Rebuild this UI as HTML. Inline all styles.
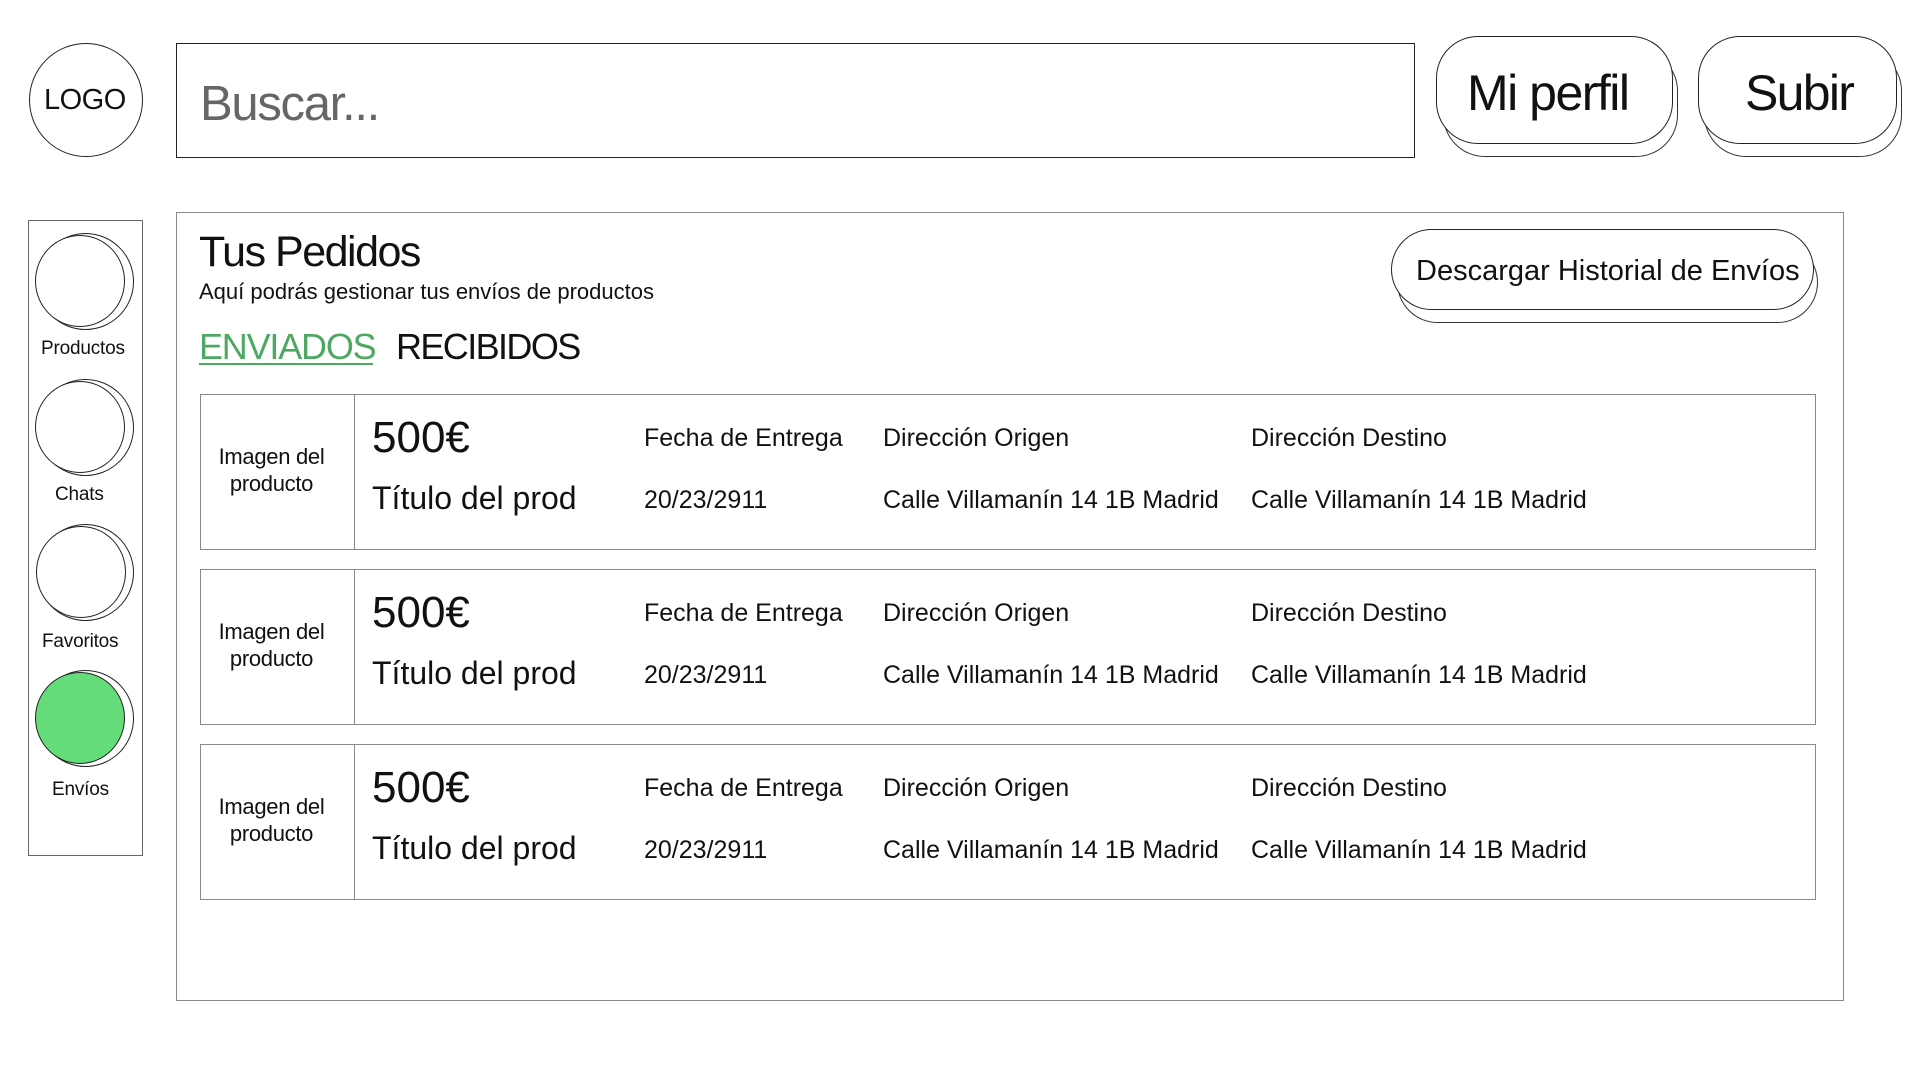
<!DOCTYPE html>
<html><head><meta charset="utf-8"><style>
*{margin:0;padding:0;box-sizing:border-box}
body{width:1920px;height:1080px;background:#fff;position:relative;overflow:hidden;font-family:"Liberation Sans",sans-serif;color:#111}
.a{position:absolute;white-space:nowrap}
.btn{position:absolute;border:1.5px solid #222;border-radius:42px;background:#fff}
.sh{position:absolute;border:1.5px solid #333;border-radius:42px;background:#fff}
.circ{position:absolute;border:1.5px solid #222;border-radius:50%;background:#fff}
.row{position:absolute;left:200px;width:1616px;height:156px;border:1.5px solid #888}
.row .div{position:absolute;left:153px;top:0;bottom:0;border-left:1.5px solid #888}
.row .img{position:absolute;left:-6px;width:153px;top:48px;text-align:center;font-size:22px;line-height:27px;letter-spacing:-0.3px}
.row .t{position:absolute;white-space:nowrap;letter-spacing:0}
</style></head><body>
<div class="circ" style="left:29px;top:43px;width:114px;height:114px"></div>
<div class="a" style="left:44px;top:84px;font-size:29px;letter-spacing:-0.5px">LOGO</div>
<div class="a" style="left:176px;top:43px;width:1239px;height:115px;border:1.5px solid #222"></div>
<div class="a" style="left:200px;top:76px;font-size:49px;color:#666;letter-spacing:-1.3px">Buscar...</div>

<div class="sh" style="left:1443px;top:49px;width:235px;height:108px"></div>
<div class="btn" style="left:1436px;top:36px;width:237px;height:108px"></div>
<div class="a" style="left:1467px;top:64px;font-size:50px;letter-spacing:-1.5px">Mi perfil</div>
<div class="sh" style="left:1704px;top:49px;width:198px;height:108px"></div>
<div class="btn" style="left:1698px;top:36px;width:199px;height:108px"></div>
<div class="a" style="left:1745px;top:64px;font-size:50px;letter-spacing:-1.7px">Subir</div>

<div class="a" style="left:28px;top:220px;width:115px;height:636px;border:1.5px solid #666"></div>
<div class="circ" style="left:37px;top:233px;width:97px;height:97px"></div>
<div class="circ" style="left:35px;top:235px;width:90px;height:92px"></div>
<div class="a" style="left:41px;top:338px;font-size:19px;letter-spacing:-0.2px">Productos</div>
<div class="circ" style="left:37px;top:379px;width:97px;height:97px"></div>
<div class="circ" style="left:35px;top:381px;width:90px;height:92px"></div>
<div class="a" style="left:55px;top:484px;font-size:19px;letter-spacing:-0.2px">Chats</div>
<div class="circ" style="left:37px;top:524px;width:97px;height:97px"></div>
<div class="circ" style="left:36px;top:526px;width:90px;height:92px"></div>
<div class="a" style="left:42px;top:631px;font-size:19px;letter-spacing:-0.2px">Favoritos</div>
<div class="circ" style="left:37px;top:670px;width:97px;height:97px"></div>
<div class="circ" style="left:35px;top:672px;width:90px;height:92px;background:#65dc7a"></div>
<div class="a" style="left:52px;top:779px;font-size:19px;letter-spacing:-0.2px">Envíos</div>

<div class="a" style="left:176px;top:212px;width:1668px;height:789px;border:1.5px solid #888"></div>
<div class="a" style="left:199px;top:228px;font-size:43px;letter-spacing:-1.5px">Tus Pedidos</div>
<div class="a" style="left:199px;top:279px;font-size:22px;letter-spacing:0">Aquí podrás gestionar tus envíos de productos</div>
<div class="a" style="left:199px;top:326px;font-size:36px;color:#4ea862;letter-spacing:-1.2px">ENVIADOS</div>
<div class="a" style="left:199px;top:363px;width:174px;height:2px;background:#4ea862"></div>
<div class="a" style="left:396px;top:326px;font-size:36px;letter-spacing:-1.6px">RECIBIDOS</div>

<div class="sh" style="left:1397px;top:242px;width:421px;height:81px"></div>
<div class="btn" style="left:1391px;top:229px;width:423px;height:81px"></div>
<div class="a" style="left:1416px;top:255px;font-size:29px;letter-spacing:0">Descargar Historial de Envíos</div>

<div class="row" style="top:394px">
<div class="div"></div><div class="img">Imagen del<br>producto</div>
<div class="t" style="left:171px;top:18px;font-size:44px">500€</div>
<div class="t" style="left:171px;top:85px;font-size:32px">Título del prod</div>
<div class="t" style="left:443px;top:29px;font-size:25px">Fecha de Entrega</div>
<div class="t" style="left:443px;top:91px;font-size:25px">20/23/2911</div>
<div class="t" style="left:682px;top:29px;font-size:25px">Dirección Origen</div>
<div class="t" style="left:682px;top:91px;font-size:25px">Calle Villamanín 14 1B Madrid</div>
<div class="t" style="left:1050px;top:29px;font-size:25px">Dirección Destino</div>
<div class="t" style="left:1050px;top:91px;font-size:25px">Calle Villamanín 14 1B Madrid</div>
</div>
<div class="row" style="top:569px">
<div class="div"></div><div class="img">Imagen del<br>producto</div>
<div class="t" style="left:171px;top:18px;font-size:44px">500€</div>
<div class="t" style="left:171px;top:85px;font-size:32px">Título del prod</div>
<div class="t" style="left:443px;top:29px;font-size:25px">Fecha de Entrega</div>
<div class="t" style="left:443px;top:91px;font-size:25px">20/23/2911</div>
<div class="t" style="left:682px;top:29px;font-size:25px">Dirección Origen</div>
<div class="t" style="left:682px;top:91px;font-size:25px">Calle Villamanín 14 1B Madrid</div>
<div class="t" style="left:1050px;top:29px;font-size:25px">Dirección Destino</div>
<div class="t" style="left:1050px;top:91px;font-size:25px">Calle Villamanín 14 1B Madrid</div>
</div>
<div class="row" style="top:744px">
<div class="div"></div><div class="img">Imagen del<br>producto</div>
<div class="t" style="left:171px;top:18px;font-size:44px">500€</div>
<div class="t" style="left:171px;top:85px;font-size:32px">Título del prod</div>
<div class="t" style="left:443px;top:29px;font-size:25px">Fecha de Entrega</div>
<div class="t" style="left:443px;top:91px;font-size:25px">20/23/2911</div>
<div class="t" style="left:682px;top:29px;font-size:25px">Dirección Origen</div>
<div class="t" style="left:682px;top:91px;font-size:25px">Calle Villamanín 14 1B Madrid</div>
<div class="t" style="left:1050px;top:29px;font-size:25px">Dirección Destino</div>
<div class="t" style="left:1050px;top:91px;font-size:25px">Calle Villamanín 14 1B Madrid</div>
</div>
</body></html>
